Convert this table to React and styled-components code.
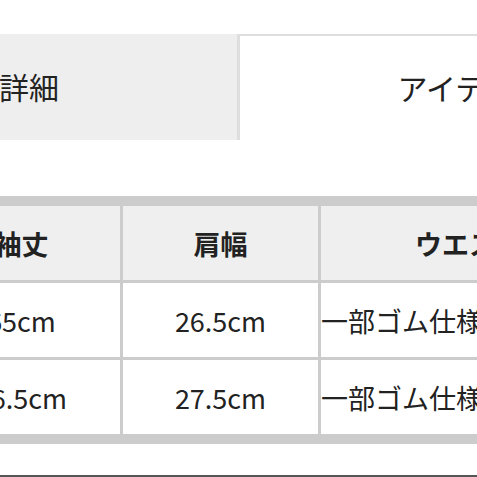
import styled, { createGlobalStyle } from "styled-components";

const GlobalStyle = createGlobalStyle`
  html, body {
    margin: 0;
    padding: 0;
    background: #fff;
  }
  body {
    font-family: "Noto Sans CJK JP", "Noto Sans", sans-serif;
    color: #222;
  }
`;

const Page = styled.div`
  width: 477px;
  height: 477px;
  overflow: hidden;
  background: #fff;
  display: flex;
  flex-direction: column;
`;

const Tabs = styled.div`
  display: flex;
  margin-top: 34px;
  margin-left: -239px;
  height: 106px;
`;

const Tab = styled.div`
  flex: 0 0 ${(p) => p.$width}px;
  display: flex;
  align-items: center;
  justify-content: center;
  box-sizing: border-box;
  font-size: 30px;
  white-space: nowrap;
  background: ${(p) => (p.$active ? "#fff" : "#eeeeee")};
  border-top: ${(p) => (p.$active ? "2px solid #dedede" : "none")};
  border-left: ${(p) => (p.$active ? "3px solid #dedede" : "none")};
  padding-bottom: 2px;
`;

const Table = styled.div`
  display: grid;
  grid-template-columns: 197px 195px 296px;
  grid-auto-rows: 74px;
  gap: 3px;
  background: #cccccc;
  padding: 10px 0;
  margin-top: 56px;
  margin-left: -77px;
  width: max-content;
`;

const Cell = styled.div`
  display: flex;
  align-items: center;
  justify-content: ${(p) => (p.$left ? "flex-start" : "center")};
  background: ${(p) => (p.$head ? "#efefef" : "#fff")};
  font-size: 27px;
  font-weight: ${(p) => (p.$head ? 700 : 400)};
  white-space: nowrap;
  overflow: visible;
`;

const BottomEdge = styled.div`
  margin-top: auto;
  height: 2px;
  background: #555;
`;

const heads = ["袖丈", "肩幅", "ウエスト"];
const rows = [
  ["65cm", "26.5cm", "一部ゴム仕様（ウエスト）"],
  ["66.5cm", "27.5cm", "一部ゴム仕様（ウエスト）"],
];

export default function App() {
  return (
    <>
      <GlobalStyle />
      <Page>
        <Tabs>
          <Tab $width={476}>商品詳細</Tab>
          <Tab $width={524} $active>アイテムサイズ</Tab>
        </Tabs>

        <Table>
          {heads.map((h) => (
            <Cell key={h} $head>{h}</Cell>
          ))}
          {rows.map((r, i) =>
            r.map((c, j) => (
              <Cell key={i + "-" + j} $left={j === 2}>{c}</Cell>
            ))
          )}
        </Table>

        <BottomEdge />
      </Page>
    </>
  );
}
